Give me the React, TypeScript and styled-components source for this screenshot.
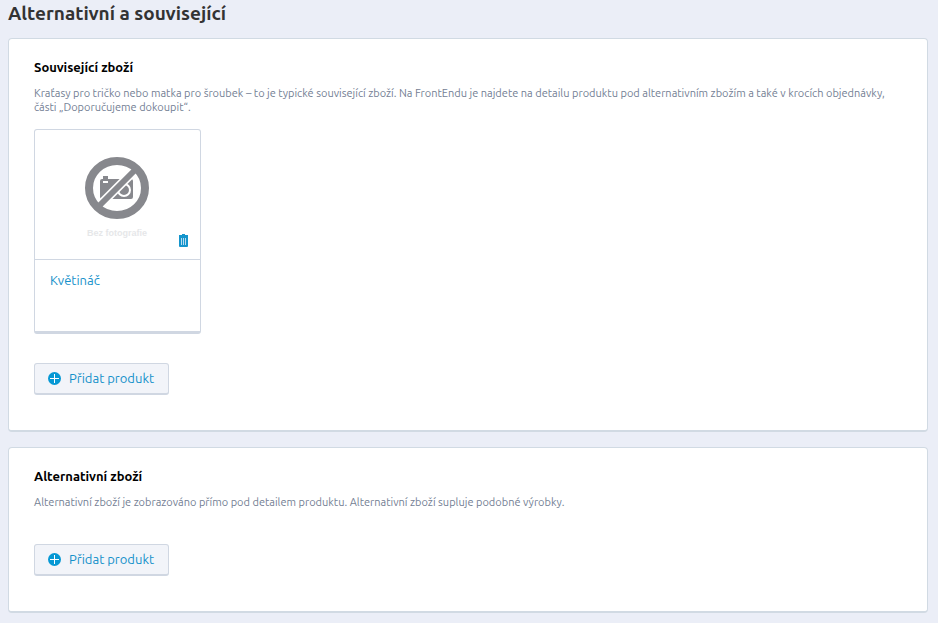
import React, { useId } from "react";
import styled, { createGlobalStyle } from "styled-components";

const GlobalStyle = createGlobalStyle`
  *, *::before, *::after { box-sizing: border-box; }
  body {
    margin: 0;
    background: #ebeef7;
    color: #000;
    font-family: Ubuntu, "Noto Sans", sans-serif;
    font-size: 13px;
  }
`;

const Page = styled.main`
  min-height: 100vh;
  padding: 0 10px 11px 8px;
`;

const PageTitle = styled.h1`
  margin: 0 0 12px;
  color: #333;
  font-size: 19px;
  line-height: 26px;
  font-weight: 600;
`;

const PanelList = styled.div`
  display: flex;
  flex-direction: column;
  gap: 15px;
`;

const Panel = styled.section`
  padding: 18px 25px 35px;
  background: #fff;
  border: 1px solid #d1dae3;
  border-bottom-width: 2px;
  border-radius: 4px;
`;

const PanelTitle = styled.h2`
  margin: 0 0 9px;
  font-size: 13px;
  line-height: 20px;
  font-weight: 700;
`;

const Description = styled.p`
  margin: 0;
  color: #748094;
  font-size: 11px;
  line-height: 14px;
`;

const ProductList = styled.ul`
  display: flex;
  flex-wrap: wrap;
  gap: 16px;
  margin: 15px 0 0;
  padding: 0;
  list-style: none;
`;

const ProductCard = styled.li`
  width: 167px;
  border: 1px solid #d0d7e2;
  border-bottom-width: 3px;
  border-radius: 3px;
`;

const Picture = styled.div`
  position: relative;
  display: flex;
  justify-content: center;
  height: 130px;
  padding: 26px 2px 0 0;
  border-bottom: 1px solid #d0d7e2;
`;

const RemoveButton = styled.button`
  position: absolute;
  right: 12px;
  bottom: 12px;
  display: flex;
  padding: 0;
  border: 0;
  background: none;
  cursor: pointer;
`;

const ProductBody = styled.div`
  min-height: 71px;
  padding: 10px 15px;
`;

const ProductLink = styled.a`
  color: #1591ca;
  line-height: 20px;
  text-decoration: none;
`;

const AddButton = styled.button`
  display: flex;
  align-items: center;
  gap: 8px;
  height: 32px;
  margin-top: ${({ $afterList }: { $afterList: boolean }) => ($afterList ? 29 : 35)}px;
  padding: 0 14px 1px 13px;
  background: #f2f4f9;
  border: 1px solid #d0d7e2;
  border-bottom-width: 2px;
  border-radius: 3px;
  color: #1591ca;
  font: inherit;
  line-height: 20px;
  cursor: pointer;
`;

function NoPhoto() {
  return (
    <svg width="66" height="84" viewBox="0 0 66 84" role="img" aria-label="Bez fotografie">
      <path d="M18 23h1v-3h5v3h23q2 0 2 2v16q0 2-2 2H18q-2 0-2-2V25q0-2 2-2z" fill="#87888d" />
      <rect x="19" y="25" width="5" height="2" fill="#fff" />
      <circle cx="40" cy="34" r="6" fill="#87888d" stroke="#fff" strokeWidth="2" />
      <path d="M12 53L54 11" stroke="#fff" strokeWidth="9" />
      <path d="M12 53L54 11" stroke="#87888d" strokeWidth="6" />
      <ellipse cx="33" cy="32" rx="28" ry="27" fill="none" stroke="#87888d" strokeWidth="8" />
      <text x="33" y="80" textAnchor="middle" fill="#e6e7e9" fontFamily="Liberation Sans, sans-serif" fontSize="9" fontWeight="700">
        Bez fotografie
      </text>
    </svg>
  );
}

function TrashIcon() {
  return (
    <svg width="9" height="13" viewBox="0 0 9 13" aria-hidden="true">
      <path d="M3 0h3v1h3v2H0V1h3zM0 3h9v9q0 1-1 1H1q-1 0-1-1z" fill="#1595cc" />
      <path d="M2.5 4v7M4.5 4v7M6.5 4v7" stroke="#b9dcf0" />
    </svg>
  );
}

function PlusIcon() {
  return (
    <svg width="13" height="13" viewBox="0 0 13 13" aria-hidden="true">
      <circle cx="6.5" cy="6.5" r="6.5" fill="#0698d4" />
      <path d="M6.5 2v9M2 6.5h9" stroke="#fff" />
    </svg>
  );
}

interface GoodsPanelProps {
  title: string;
  description: string;
  products: string[];
}

function GoodsPanel({ title, description, products }: GoodsPanelProps) {
  const titleId = useId();
  return (
    <Panel aria-labelledby={titleId}>
      <PanelTitle id={titleId}>{title}</PanelTitle>
      <Description>{description}</Description>
      {products.length > 0 && (
        <ProductList>
          {products.map((name) => (
            <ProductCard key={name}>
              <Picture>
                <NoPhoto />
                <RemoveButton type="button" aria-label={`Odebrat ${name}`}>
                  <TrashIcon />
                </RemoveButton>
              </Picture>
              <ProductBody>
                <ProductLink href="#">{name}</ProductLink>
              </ProductBody>
            </ProductCard>
          ))}
        </ProductList>
      )}
      <AddButton type="button" $afterList={products.length > 0}>
        <PlusIcon />
        Přidat produkt
      </AddButton>
    </Panel>
  );
}

export default function App() {
  return (
    <>
      <GlobalStyle />
      <Page>
        <PageTitle>Alternativní a související</PageTitle>
        <PanelList>
          <GoodsPanel
            title="Související zboží"
            description="Kraťasy pro tričko nebo matka pro šroubek – to je typické související zboží. Na FrontEndu je najdete na detailu produktu pod alternativním zbožím a také v krocích objednávky, části „Doporučujeme dokoupit“."
            products={["Květináč"]}
          />
          <GoodsPanel
            title="Alternativní zboží"
            description="Alternativní zboží je zobrazováno přímo pod detailem produktu. Alternativní zboží supluje podobné výrobky."
            products={[]}
          />
        </PanelList>
      </Page>
    </>
  );
}
